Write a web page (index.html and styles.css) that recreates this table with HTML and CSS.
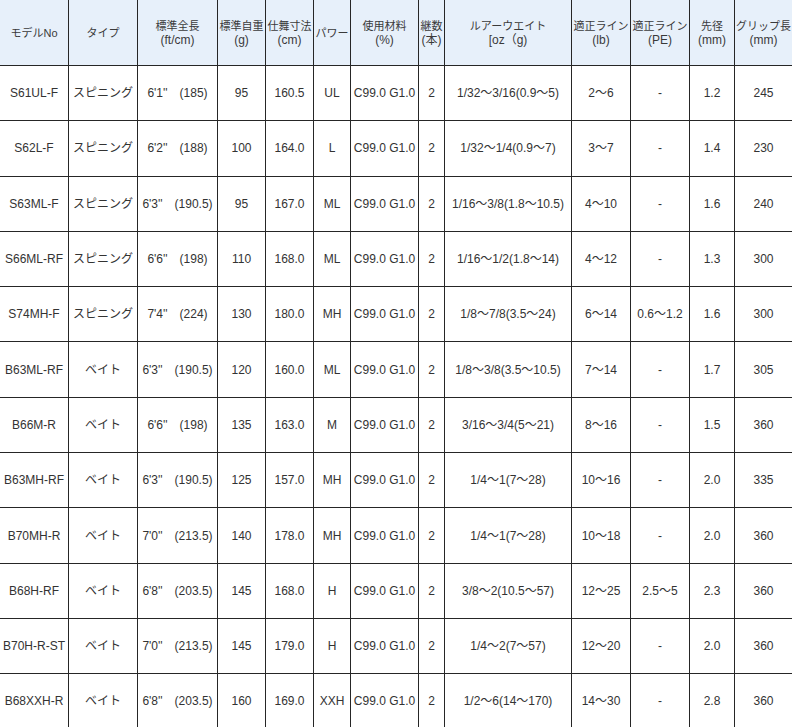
FILE: index.html
```html
<!DOCTYPE html>
<html lang="ja">
<head>
<meta charset="utf-8">
<title>スペック表</title>
<link rel="stylesheet" href="styles.css">
</head>
<body>
<div class="spec" role="table">
  <div class="h" role="columnheader">モデルNo</div>
  <div class="h" role="columnheader">タイプ</div>
  <div class="h" role="columnheader"><span>標準全長</span><span class="u">(ft/cm)</span></div>
  <div class="h" role="columnheader"><span>標準自重</span><span class="u">(g)</span></div>
  <div class="h" role="columnheader"><span>仕舞寸法</span><span class="u">(cm)</span></div>
  <div class="h" role="columnheader">パワー</div>
  <div class="h" role="columnheader"><span>使用材料</span><span class="u">(%)</span></div>
  <div class="h" role="columnheader"><span>継数</span><span class="u">(本)</span></div>
  <div class="h" role="columnheader"><span>ルアーウエイト</span><span class="u">[oz（g)</span></div>
  <div class="h" role="columnheader"><span>適正ライン</span><span class="u">(lb)</span></div>
  <div class="h" role="columnheader"><span>適正ライン</span><span class="u">(PE)</span></div>
  <div class="h" role="columnheader"><span>先径</span><span class="u">(mm)</span></div>
  <div class="h last" role="columnheader"><span>グリップ長</span><span class="u">(mm)</span></div>

  <div class="c">S61UL-F</div><div class="c">スピニング</div><div class="c">6'1''　(185)</div><div class="c">95</div><div class="c">160.5</div><div class="c">UL</div><div class="c">C99.0 G1.0</div><div class="c">2</div><div class="c">1/32～3/16(0.9～5)</div><div class="c">2～6</div><div class="c">-</div><div class="c">1.2</div><div class="c last">245</div>

  <div class="c">S62L-F</div><div class="c">スピニング</div><div class="c">6'2''　(188)</div><div class="c">100</div><div class="c">164.0</div><div class="c">L</div><div class="c">C99.0 G1.0</div><div class="c">2</div><div class="c">1/32～1/4(0.9～7)</div><div class="c">3～7</div><div class="c">-</div><div class="c">1.4</div><div class="c last">230</div>

  <div class="c">S63ML-F</div><div class="c">スピニング</div><div class="c">6'3''　(190.5)</div><div class="c">95</div><div class="c">167.0</div><div class="c">ML</div><div class="c">C99.0 G1.0</div><div class="c">2</div><div class="c">1/16～3/8(1.8～10.5)</div><div class="c">4～10</div><div class="c">-</div><div class="c">1.6</div><div class="c last">240</div>

  <div class="c">S66ML-RF</div><div class="c">スピニング</div><div class="c">6'6''　(198)</div><div class="c">110</div><div class="c">168.0</div><div class="c">ML</div><div class="c">C99.0 G1.0</div><div class="c">2</div><div class="c">1/16～1/2(1.8～14)</div><div class="c">4～12</div><div class="c">-</div><div class="c">1.3</div><div class="c last">300</div>

  <div class="c">S74MH-F</div><div class="c">スピニング</div><div class="c">7'4''　(224)</div><div class="c">130</div><div class="c">180.0</div><div class="c">MH</div><div class="c">C99.0 G1.0</div><div class="c">2</div><div class="c">1/8～7/8(3.5～24)</div><div class="c">6～14</div><div class="c">0.6～1.2</div><div class="c">1.6</div><div class="c last">300</div>

  <div class="c">B63ML-RF</div><div class="c">ベイト</div><div class="c">6'3''　(190.5)</div><div class="c">120</div><div class="c">160.0</div><div class="c">ML</div><div class="c">C99.0 G1.0</div><div class="c">2</div><div class="c">1/8～3/8(3.5～10.5)</div><div class="c">7～14</div><div class="c">-</div><div class="c">1.7</div><div class="c last">305</div>

  <div class="c">B66M-R</div><div class="c">ベイト</div><div class="c">6'6''　(198)</div><div class="c">135</div><div class="c">163.0</div><div class="c">M</div><div class="c">C99.0 G1.0</div><div class="c">2</div><div class="c">3/16～3/4(5～21)</div><div class="c">8～16</div><div class="c">-</div><div class="c">1.5</div><div class="c last">360</div>

  <div class="c">B63MH-RF</div><div class="c">ベイト</div><div class="c">6'3''　(190.5)</div><div class="c">125</div><div class="c">157.0</div><div class="c">MH</div><div class="c">C99.0 G1.0</div><div class="c">2</div><div class="c">1/4～1(7～28)</div><div class="c">10～16</div><div class="c">-</div><div class="c">2.0</div><div class="c last">335</div>

  <div class="c">B70MH-R</div><div class="c">ベイト</div><div class="c">7'0''　(213.5)</div><div class="c">140</div><div class="c">178.0</div><div class="c">MH</div><div class="c">C99.0 G1.0</div><div class="c">2</div><div class="c">1/4～1(7～28)</div><div class="c">10～18</div><div class="c">-</div><div class="c">2.0</div><div class="c last">360</div>

  <div class="c">B68H-RF</div><div class="c">ベイト</div><div class="c">6'8''　(203.5)</div><div class="c">145</div><div class="c">168.0</div><div class="c">H</div><div class="c">C99.0 G1.0</div><div class="c">2</div><div class="c">3/8～2(10.5～57)</div><div class="c">12～25</div><div class="c">2.5～5</div><div class="c">2.3</div><div class="c last">360</div>

  <div class="c">B70H-R-ST</div><div class="c">ベイト</div><div class="c">7'0''　(213.5)</div><div class="c">145</div><div class="c">179.0</div><div class="c">H</div><div class="c">C99.0 G1.0</div><div class="c">2</div><div class="c">1/4～2(7～57)</div><div class="c">12～20</div><div class="c">-</div><div class="c">2.0</div><div class="c last">360</div>

  <div class="c">B68XXH-R</div><div class="c">ベイト</div><div class="c">6'8''　(203.5)</div><div class="c">160</div><div class="c">169.0</div><div class="c">XXH</div><div class="c">C99.0 G1.0</div><div class="c">2</div><div class="c">1/2～6(14～170)</div><div class="c">14～30</div><div class="c">-</div><div class="c">2.8</div><div class="c last">360</div>
</div>
</body>
</html>
```
FILE: styles.css
```css
html, body {
  margin: 0;
  padding: 0;
  background: #ffffff;
  overflow: hidden;
}

.spec {
  display: grid;
  grid-template-columns: 69px 69px 80px 48px 48px 37px 68px 26px 127px 59px 59px 45px 57px;
  grid-template-rows: 66px;
  grid-auto-rows: 55.3px;
  width: 792px;
  font-family: "Liberation Sans", "Noto Sans CJK JP", sans-serif;
  color: #333333;
}

.h, .c {
  box-sizing: border-box;
  display: flex;
  align-items: center;
  justify-content: center;
  text-align: center;
  border-right: 1px solid #262626;
  border-bottom: 1px solid #262626;
  white-space: nowrap;
  overflow: visible;
}

.h {
  flex-direction: column;
  background: #e7f0fa;
  font-size: 11px;
  line-height: 14px;
  color: #3a3a3a;
}

.u {
  font-size: 12px;
}

.c {
  font-size: 12px;
  line-height: 16px;
}

.last {
  border-right: none;
}
```
